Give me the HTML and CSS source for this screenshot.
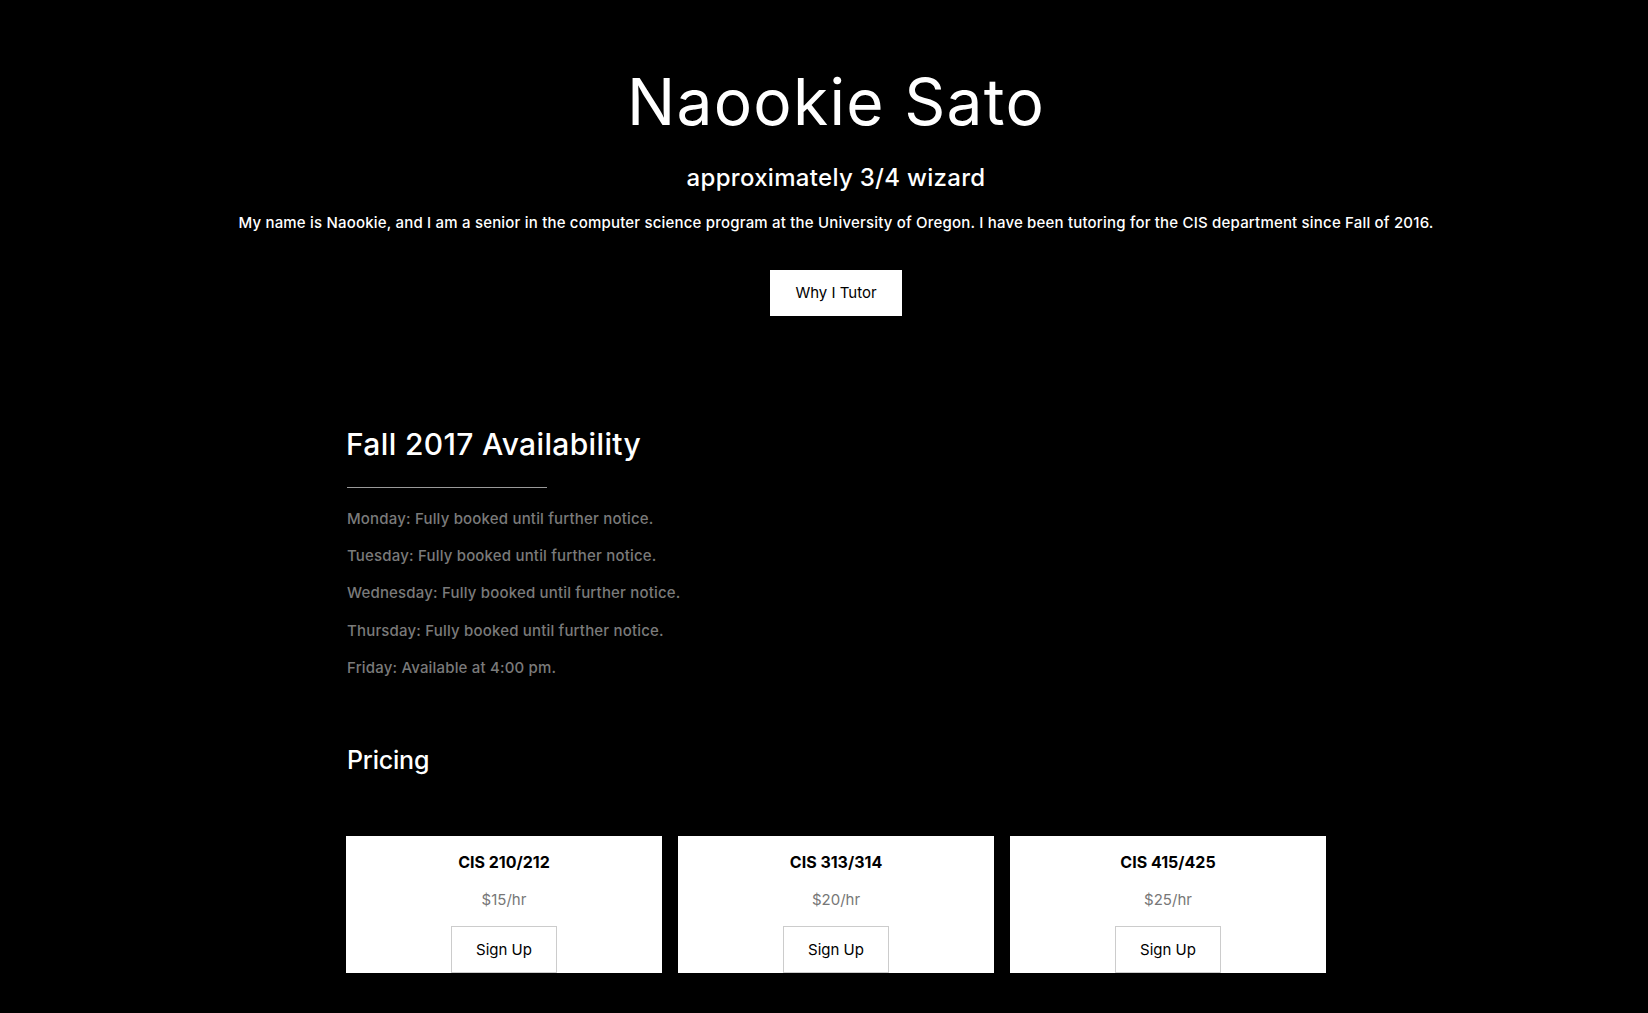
FILE: index.html
```html
<!DOCTYPE html>
<html lang="en">
<head>
<meta charset="utf-8">
<title>Naookie Sato</title>
<link rel="stylesheet" href="styles.css">
</head>
<body>
<header class="intro">
  <h1 class="name">Naookie Sato</h1>
  <p class="tagline">approximately 3/4 wizard</p>
  <p class="bio">My name is Naookie, and I am a senior in the computer science program at the University of Oregon. I have been tutoring for the CIS department since Fall of 2016.</p>
  <a class="btn-why" href="#">Why I Tutor</a>
</header>
<main class="wrap">
  <section class="avail">
    <h2 class="avail-title">Fall 2017 Availability</h2>
    <hr class="rule">
    <ul class="days">
      <li>Monday: Fully booked until further notice.</li>
      <li>Tuesday: Fully booked until further notice.</li>
      <li>Wednesday: Fully booked until further notice.</li>
      <li>Thursday: Fully booked until further notice.</li>
      <li>Friday: Available at 4:00 pm.</li>
    </ul>
  </section>
  <section class="pricing">
    <h3 class="pricing-title">Pricing</h3>
    <div class="cards">
      <div class="card">
        <h4 class="card-title">CIS 210/212</h4>
        <p class="price">$15/hr</p>
        <a class="btn-sign" href="#">Sign Up</a>
      </div>
      <div class="card">
        <h4 class="card-title">CIS 313/314</h4>
        <p class="price">$20/hr</p>
        <a class="btn-sign" href="#">Sign Up</a>
      </div>
      <div class="card">
        <h4 class="card-title">CIS 415/425</h4>
        <p class="price">$25/hr</p>
        <a class="btn-sign" href="#">Sign Up</a>
      </div>
    </div>
  </section>
</main>
</body>
</html>
```
FILE: styles.css
```css
html, body {
  margin: 0;
  background: #000;
}
body {
  padding-left: 24px;
  font-family: Inter, "DejaVu Sans", sans-serif;
  color: #fff;
  overflow: hidden;
  height: 1013px;
  box-sizing: border-box;
}
.intro {
  text-align: center;
  padding-top: 67px;
}
.name {
  margin: 0;
  font-size: 64px;
  line-height: 70px;
  font-weight: 400;
  letter-spacing: 1.3px;
}
.tagline {
  margin: 26px 0 0;
  font-size: 24px;
  line-height: 30px;
  font-weight: 500;
  letter-spacing: 0.3px;
}
.bio {
  margin: 20px 0 0;
  font-size: 15px;
  line-height: 20px;
  font-weight: 500;
  letter-spacing: 0.19px;
}
.btn-why {
  display: inline-block;
  margin-top: 37px;
  height: 46px;
  line-height: 46px;
  padding: 0 25px;
  background: #fff;
  color: #000;
  font-size: 15px;
  text-decoration: none;
}
.wrap {
  width: 980px;
  margin: 0 auto;
}
.avail-title {
  margin: 110px 0 0;
  font-size: 30px;
  line-height: 36px;
  font-weight: 500;
  letter-spacing: 0.35px;
}
.rule {
  margin: 25px 0 0 1px;
  width: 200px;
  height: 1px;
  border: 0;
  background: #9a9a9a;
}
.days {
  list-style: none;
  margin: 21px 0 0;
  padding: 0 0 0 1px;
  display: flex;
  flex-direction: column;
  gap: 17.2px;
  font-size: 15px;
  line-height: 20px;
  color: #7a7a7a;
  font-weight: 500;
  letter-spacing: 0.18px;
}
.pricing-title {
  margin: 66px 0 0 1px;
  font-size: 25px;
  line-height: 32px;
  font-weight: 500;
  letter-spacing: -0.2px;
}
.cards {
  margin-top: 60px;
  display: flex;
  gap: 16px;
}
.card {
  width: 316px;
  height: 137px;
  overflow: hidden;
  background: #fff;
  text-align: center;
  padding-top: 16px;
  box-sizing: border-box;
}
.card-title {
  margin: 0;
  font-size: 16px;
  line-height: 20px;
  font-weight: 700;
  color: #000;
}
.price {
  margin: 18px 0 0;
  font-size: 15px;
  line-height: 20px;
  color: #777;
}
.btn-sign {
  display: inline-block;
  margin-top: 16px;
  height: 45px;
  line-height: 45px;
  padding: 0 24px;
  border: 1px solid #ccc;
  color: #000;
  font-size: 15px;
  text-decoration: none;
}
```
